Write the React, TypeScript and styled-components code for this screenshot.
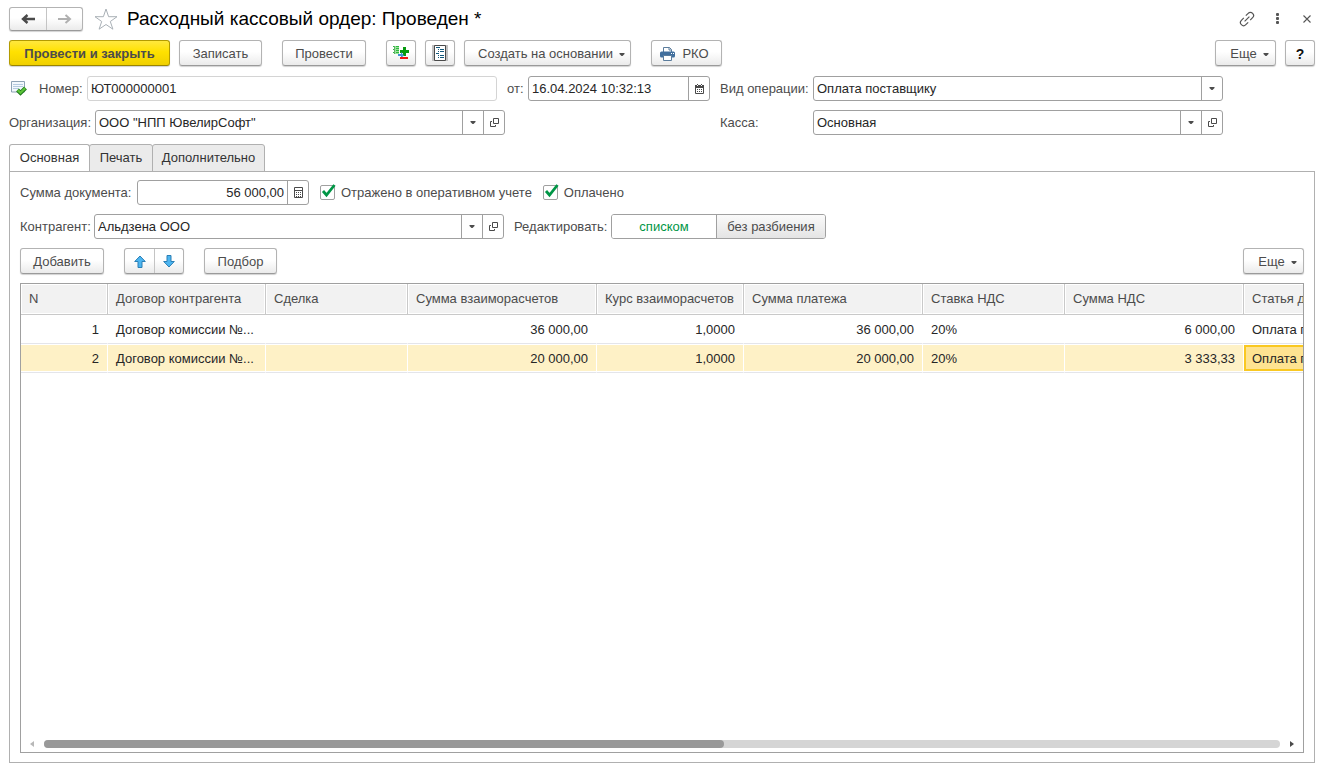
import React from "react";
import styled, { createGlobalStyle, css } from "styled-components";

const GlobalStyle = createGlobalStyle`
  *, *::before, *::after { box-sizing: border-box; }
  body { margin: 0; background: #fff; }
  body, button, input, select, table {
    font-family: "Liberation Sans", Arial, sans-serif;
    font-size: 13px;
    line-height: 16px;
    color: #4c4c4c;
  }
`;

const line = "#a0a0a0";

const Page = styled.main`
  display: flex;
  flex-direction: column;
  min-height: 100vh;
  padding: 6px 6px 5px 9px;
`;

const TitleBar = styled.header`
  display: flex;
  align-items: center;
  height: 25px;
`;

const Title = styled.h1`
  flex: 1;
  margin: 0 0 0 9px;
  font-size: 19px;
  line-height: 24px;
  font-weight: 400;
  color: #000;
  white-space: nowrap;
`;

const IconButton = styled.button`
  display: grid;
  place-items: center;
  width: 16px;
  height: 24px;
  padding: 0;
  border: 0;
  background: none;
`;

const TitleActions = styled.div`
  display: flex;
  gap: 14px;
`;

const StarButton = styled(IconButton)`
  width: 24px;
  margin-left: 11px;
`;

const Toolbar = styled.div<{ $top: number }>`
  display: flex;
  align-items: flex-start;
  margin-top: ${(p) => p.$top}px;
`;

const Gap = styled.span<{ $size?: number }>`
  width: ${(p) => p.$size ?? 20}px;
`;

const Spacer = styled.span`
  flex: 1;
`;

const raised = css`
  border: 1px solid #b3b3b3;
  border-bottom-color: #9a9a9a;
  border-radius: 3px;
  background: linear-gradient(#fff 0%, #fff 45%, #ebebeb 100%);
  box-shadow: 0 1px 1px rgba(0, 0, 0, 0.18);
`;

const Button = styled.button<{ $primary?: boolean; $width: number }>`
  ${raised}
  display: flex;
  align-items: center;
  justify-content: center;
  gap: 6px;
  flex: none;
  width: ${(p) => p.$width}px;
  height: 26px;
  padding: 2px 0 0;
  white-space: nowrap;
  ${(p) =>
    p.$primary &&
    css`
      font-weight: 700;
      border-color: #b39b00;
      border-bottom-color: #9a8500;
      background: linear-gradient(#ffe83e 0%, #ffe100 45%, #f0d000 100%);
    `}
`;

const MenuButton = styled(Button)`
  padding-left: 8px;
`;

const IconOnlyButton = styled(Button)`
  padding: 0;
`;

const PrintButton = styled(Button)`
  gap: 7px;
  padding-right: 4px;
`;

const HelpMark = styled.b`
  font-size: 14px;
  color: #111;
`;

const PairGroup = styled.div<{ $height: number }>`
  ${raised}
  display: flex;
  height: ${(p) => p.$height}px;
`;

const PairButton = styled.button<{ $width: number }>`
  display: grid;
  place-items: center;
  width: ${(p) => p.$width}px;
  padding: 0;
  border: 0;
  background: none;
  & + & {
    border-left: 1px solid #c4c4c4;
  }
`;

const Form = styled.div`
  display: grid;
  grid-template-columns: minmax(0, 701fr) minmax(0, 503fr);
  gap: 9px 10px;
  margin-top: 10px;
  padding-right: 92px;
`;

const FormRow = styled.div<{ $top?: number }>`
  display: flex;
  align-items: center;
  min-width: 0;
  height: 25px;
  margin-top: ${(p) => p.$top ?? 0}px;
`;

const Label = styled.label<{ $width?: number }>`
  flex: none;
  width: ${(p) => (p.$width ? `${p.$width}px` : "auto")};
  white-space: nowrap;
`;

const Field = styled.div<{ $width?: number; $muted?: boolean }>`
  display: grid;
  grid-template-columns: minmax(0, 1fr) auto auto;
  flex: ${(p) => (p.$width ? `0 1 ${p.$width}px` : "1")};
  min-width: 0;
  height: 25px;
  border: 1px solid ${(p) => (p.$muted ? "#d4d4d4" : line)};
  border-radius: 3px;
  background: #fff;
  overflow: hidden;
`;

const valueText = css`
  width: 100%;
  min-width: 0;
  height: 23px;
  padding: 0 3px;
  border: 0;
  outline: 0;
  background: transparent;
  color: #262626;
`;

const TextInput = styled.input<{ $right?: boolean }>`
  ${valueText}
  text-align: ${(p) => (p.$right ? "right" : "left")};
`;

const Select = styled.select`
  ${valueText}
  appearance: none;
  grid-row: 1;
  grid-column: 1 / 3;
  padding-right: 24px;
`;

const ArrowCell = styled.span`
  grid-row: 1;
  grid-column: 2;
  display: grid;
  place-items: center;
  width: 21px;
  border-left: 1px solid ${line};
  pointer-events: none;
`;

const FieldButton = styled.button`
  display: grid;
  place-items: center;
  width: 21px;
  padding: 0;
  border: 0;
  border-left: 1px solid ${line};
  background: none;
`;

const StatusIcon = styled.span`
  display: grid;
  width: 30px;
  height: 25px;
  align-items: center;
`;

const Tabs = styled.div`
  display: flex;
  height: 28px;
  margin-top: 9px;
  margin-bottom: -1px;
`;

const Tab = styled.button<{ $active?: boolean; $width: number }>`
  width: ${(p) => p.$width}px;
  padding: 0;
  border: 1px solid #b0b0b0;
  border-bottom-color: ${(p) => (p.$active ? "#fff" : "#b0b0b0")};
  border-radius: 3px 3px 0 0;
  background: ${(p) => (p.$active ? "#fff" : "#ebebeb")};
  color: #333;
  & + & {
    margin-left: -1px;
  }
`;

const Panel = styled.section`
  display: flex;
  flex-direction: column;
  flex: 1;
  padding: 8px 10px 9px;
  border: 1px solid #b0b0b0;
`;

const CheckLabel = styled.label`
  display: flex;
  align-items: center;
  gap: 6px;
  margin-left: 11px;
  white-space: nowrap;
`;

const CheckBox = styled.span`
  display: grid;
  width: 15px;
  height: 15px;
  & > * {
    grid-area: 1 / 1;
  }
  & svg {
    overflow: visible;
    pointer-events: none;
  }
  & input {
    appearance: none;
    width: 15px;
    height: 15px;
    margin: 0;
    border: 1px solid ${line};
    border-radius: 2px;
    background: #fff;
  }
  & input:not(:checked) + svg {
    visibility: hidden;
  }
`;

const Segments = styled.div`
  display: flex;
  height: 25px;
  border: 1px solid ${line};
  border-radius: 3px;
  overflow: hidden;
`;

const Segment = styled.button<{ $on?: boolean; $width: number }>`
  width: ${(p) => p.$width}px;
  padding: 0;
  border: 0;
  background: ${(p) => (p.$on ? "#fff" : "linear-gradient(#fafafa, #e4e4e4)")};
  color: ${(p) => (p.$on ? "#009646" : "#4c4c4c")};
  & + & {
    border-left: 1px solid ${line};
  }
`;

const Grid = styled.div`
  display: flex;
  flex-direction: column;
  flex: 1;
  min-width: 0;
  margin-top: 9px;
  border: 1px solid ${line};
`;

const GridBody = styled.div`
  flex: 1;
  overflow: hidden;
`;

const Table = styled.table`
  width: 1402px;
  table-layout: fixed;
  border-collapse: separate;
  border-spacing: 0;
`;

const Th = styled.th`
  height: 31px;
  padding: 0 0 0 8px;
  border-right: 1px solid #c9c9c9;
  border-bottom: 1px solid #c9c9c9;
  background: #f2f2f2;
  box-shadow: inset 1px 1px #fff, inset -1px -1px #fff;
  font-weight: 400;
  text-align: left;
  white-space: nowrap;
`;

const Td = styled.td<{ $right?: boolean; $active?: boolean }>`
  height: 29px;
  padding: 2px 8px 0;
  border-right: 1px solid #fff;
  border-bottom: 1px solid #e4e5ea;
  box-shadow: inset 0 1px #fff, inset 0 -1px #fff;
  color: #262626;
  text-align: ${(p) => (p.$right ? "right" : "left")};
  white-space: nowrap;
  ${(p) =>
    p.$active &&
    css`
      background: #fee391;
      box-shadow: inset 0 1px #fff, inset 0 -1px #fff, inset 0 3px #f9c822,
        inset 0 -3px #f9c822, inset 2px 0 #f9c822, inset -2px 0 #f9c822;
    `}
`;

const Row = styled.tr<{ $selected?: boolean }>`
  background: ${(p) => (p.$selected ? "#fef1c6" : "#fff")};
`;

const ScrollBar = styled.div`
  display: flex;
  align-items: center;
  gap: 8px;
  height: 16px;
  padding: 0 7px;
`;

const Track = styled.div`
  flex: 1;
  height: 8px;
  border-radius: 4px;
  background: #d5d5d5;
`;

const Thumb = styled.div`
  width: 55%;
  height: 8px;
  border-radius: 4px;
  background: #999;
`;

const ScrollArrow = styled.button`
  display: grid;
  place-items: center;
  width: 8px;
  height: 16px;
  padding: 0;
  border: 0;
  background: none;
`;

const Caret = () => (
  <svg width="6" height="3" viewBox="0 0 6 3" aria-hidden="true">
    <path d="M0.500 0h5v1L3.500 3h-1L0.500 1z" fill="#4c4c4c" />
  </svg>
);

const NavArrow = ({ back }: { back?: boolean }) => (
  <svg width="15" height="12" viewBox="0 0 15 12" aria-hidden="true">
    <path
      d={back ? "M14 6H3M6.500 2L2 6l4.500 4" : "M1 6h11M8.500 2L13 6l-4.500 4"}
      fill="none"
      stroke={back ? "#4a4a4a" : "#b0b0b0"}
      strokeWidth={back ? 2.4 : 2}
    />
  </svg>
);

const Star = () => (
  <svg width="24" height="22" viewBox="0 0 24 22" aria-hidden="true">
    <path
      d="M12 1l2.600 7.700H23l-6.700 4.800 2.600 7.700L12 16.500l-6.900 4.700 2.600-7.700L1 8.700h8.400z"
      fill="#fff"
      stroke="#a9b0b6"
    />
  </svg>
);

const LinkIcon = () => (
  <svg width="16" height="16" viewBox="0 0 16 16" fill="none" stroke="#555" strokeWidth="1.200" aria-hidden="true">
    <path d="M6.800 4.700L9.200 2.300a3.110 3.110 0 0 1 4.400 4.400L11.200 9.100" />
    <path d="M9.200 11.300L6.800 13.700a3.110 3.110 0 0 1-4.400-4.400L4.800 6.900" />
    <path d="M5.600 10.400l4.800-4.800" />
  </svg>
);

const Dots = () => (
  <svg width="3" height="11" viewBox="0 0 3 11" fill="#555" aria-hidden="true">
    <rect width="3" height="3" rx="1" y="0" />
    <rect width="3" height="3" rx="1" y="4" />
    <rect width="3" height="3" rx="1" y="8" />
  </svg>
);

const Cross = () => (
  <svg width="8" height="8" viewBox="0 0 8 8" aria-hidden="true">
    <path d="M0.500 0.500l7 7M7.500 0.500l-7 7" stroke="#555" strokeWidth="1.100" />
  </svg>
);

const Calendar = () => (
  <svg width="9" height="10" viewBox="0 0 9 10" aria-hidden="true">
    <path d="M0.500 1.500h8v8h-8z" fill="#fff" stroke="#4a4a4a" />
    <path d="M0 1h9v3H0zM2 0h1v1H2zM6 0h1v1H6z" fill="#4a4a4a" />
    <path d="M2 5h1v1H2zM4 5h1v1H4zM6 5h1v1H6zM2 7h1v1H2zM4 7h1v1H4zM6 7h1v1H6z" fill="#4a4a4a" />
    <path d="M2 1h1v1H2zM6 1h1v1H6z" fill="#fff" />
  </svg>
);

const Calculator = () => (
  <svg width="9" height="11" viewBox="0 0 9 11" aria-hidden="true">
    <path d="M0.500 0.500h8v10h-8zM0.500 3.500h8" fill="none" stroke="#4a4a4a" />
    <path d="M2 5h1v1H2zM4 5h1v1H4zM6 5h1v1H6zM2 7h1v1H2zM4 7h1v1H4zM6 7h1v1H6zM2 9h1v1H2zM4 9h1v1H4zM6 9h1v1H6z" fill="#4a4a4a" />
  </svg>
);

const OpenIcon = () => (
  <svg width="9" height="9" viewBox="0 0 9 9" fill="none" stroke="#4a4a4a" aria-hidden="true">
    <path d="M3.500 0.500h5v5h-5z" />
    <path d="M2 3.500H0.500v5h5V7" />
  </svg>
);

const PostedIcon = () => (
  <svg width="18" height="16" viewBox="0 0 18 16" aria-hidden="true">
    <path d="M2.500 0.500h13v10.500h-13z" fill="#f3f8fd" stroke="#8ea3b5" />
    <path d="M4 3.500h10M4 5.500h10M4 7.500h6" stroke="#b5cbe0" />
    <path d="M8.500 9l3 3 5-5" fill="none" stroke="#1f7a1c" strokeWidth="4" />
    <path d="M8.700 9.100l2.800 2.700 4.700-4.700" fill="none" stroke="#5cc338" strokeWidth="2.200" />
  </svg>
);

const PostingsIcon = () => (
  <svg width="16" height="16" viewBox="0 0 16 16" aria-hidden="true">
    <path d="M1 1h5v8H1z" fill="#9be29c" />
    <path d="M0 1h1v1H0zM0 4h1v1H0zM0 7h1v1H0zM3 1h3v1H3zM3 3h3v1H3zM3 5h3v1H3zM3 7h3v1H3z" fill="#2dbb3c" />
    <path d="M1 1h1v8H1z" fill="#5fae68" />
    <path d="M10 2h3v3h3v3h-3v3h-3V8H7V5h3z" fill="#079a10" />
    <path d="M5 9h3V7l3 3.500L8 13v-2H5z" fill="#3f93d4" />
    <path d="M7 12h8v2H7z" fill="#f01414" />
  </svg>
);

const ReportIcon = () => (
  <svg width="16" height="16" viewBox="0 0 16 16" aria-hidden="true">
    <path d="M0 0h16v16H0z" fill="#c2c2c2" />
    <path d="M2.500 0.500h11v15h-11z" fill="#fff" stroke="#4a4a4a" />
    <path d="M4 2.500h4M6 4.500h1M8 4.500h4M6 6.500h1M8 6.500h4M4 8.500h3M6 10.500h1M8 10.500h4M6 12.500h1M8 12.500h4" stroke="#145a7d" />
  </svg>
);

const Printer = () => (
  <svg width="15" height="14" viewBox="0 0 15 14" aria-hidden="true">
    <path d="M3.500 5V0.500h6l2 2V5" fill="#fff" stroke="#5b7c9c" />
    <path d="M9 0.500V3h2.500" fill="none" stroke="#5b7c9c" />
    <rect y="4.500" width="15" height="6" rx="1.500" fill="#416f9d" />
    <path d="M11 6h1v1h-1zM13 6h1v1h-1z" fill="#fff" />
    <path d="M3.500 8.500h8v5h-8z" fill="#fff" stroke="#5b7c9c" />
  </svg>
);

const Move = ({ down }: { down?: boolean }) => (
  <svg width="12" height="13" viewBox="0 0 12 13" aria-hidden="true">
    <path
      d={down ? "M4 0.500h4v6h3.300L6 12 0.700 6.500H4z" : "M4 12.500h4v-6h3.300L6 1 0.700 6.500H4z"}
      fill="#4db5f0"
      stroke="#2b7fb5"
    />
  </svg>
);

const Check = () => (
  <svg width="15" height="15" viewBox="0 0 15 15" aria-hidden="true">
    <path d="M3 6l3.500 4L14.500 0" fill="none" stroke="#009646" strokeWidth="2.800" />
  </svg>
);

interface LookupProps {
  id: string;
  value: string;
  width?: number;
  open?: boolean;
}

const Lookup = ({ id, value, width, open = true }: LookupProps) => (
  <Field $width={width}>
    <Select id={id}>
      <option>{value}</option>
    </Select>
    <ArrowCell>
      <Caret />
    </ArrowCell>
    {open && (
      <FieldButton type="button" aria-label="Открыть">
        <OpenIcon />
      </FieldButton>
    )}
  </Field>
);

const CheckItem = ({ text }: { text: string }) => (
  <CheckLabel>
    <CheckBox>
      <input type="checkbox" defaultChecked />
      <Check />
    </CheckBox>
    {text}
  </CheckLabel>
);

const columns = [
  { title: "N", width: 87, right: true },
  { title: "Договор контрагента", width: 158 },
  { title: "Сделка", width: 142 },
  { title: "Сумма взаиморасчетов", width: 189, right: true },
  { title: "Курс взаиморасчетов", width: 147, right: true },
  { title: "Сумма платежа", width: 179, right: true },
  { title: "Ставка НДС", width: 142 },
  { title: "Сумма НДС", width: 179, right: true },
  { title: "Статья движения", width: 179 },
];

const rows = [
  ["1", "Договор комиссии №...", "", "36 000,00", "1,0000", "36 000,00", "20%", "6 000,00", "Оплата поставщикам"],
  ["2", "Договор комиссии №...", "", "20 000,00", "1,0000", "20 000,00", "20%", "3 333,33", "Оплата поставщикам"],
];

export default function App() {
  return (
    <>
      <GlobalStyle />
      <Page>
        <TitleBar>
          <PairGroup $height={24}>
            <PairButton type="button" $width={36} aria-label="Назад">
              <NavArrow back />
            </PairButton>
            <PairButton type="button" $width={36} aria-label="Вперед">
              <NavArrow />
            </PairButton>
          </PairGroup>
          <StarButton type="button" aria-label="В избранное">
            <Star />
          </StarButton>
          <Title>Расходный кассовый ордер: Проведен *</Title>
          <TitleActions>
            <IconButton type="button" aria-label="Ссылка">
              <LinkIcon />
            </IconButton>
            <IconButton type="button" aria-label="Меню">
              <Dots />
            </IconButton>
            <IconButton type="button" aria-label="Закрыть">
              <Cross />
            </IconButton>
          </TitleActions>
        </TitleBar>

        <Toolbar $top={9}>
          <Button type="button" $primary $width={161}>Провести и закрыть</Button>
          <Gap $size={9} />
          <Button type="button" $width={83}>Записать</Button>
          <Gap />
          <Button type="button" $width={84}>Провести</Button>
          <Gap />
          <IconOnlyButton type="button" $width={30} aria-label="Движения документа">
            <PostingsIcon />
          </IconOnlyButton>
          <Gap $size={9} />
          <IconOnlyButton type="button" $width={30} aria-label="Отчет">
            <ReportIcon />
          </IconOnlyButton>
          <Gap $size={9} />
          <MenuButton type="button" $width={167}>
            Создать на основании <Caret />
          </MenuButton>
          <Gap />
          <PrintButton type="button" $width={71}>
            <Printer /> РКО
          </PrintButton>
          <Spacer />
          <MenuButton type="button" $width={61}>
            Еще <Caret />
          </MenuButton>
          <Gap $size={9} />
          <Button type="button" $width={30} aria-label="Справка">
            <HelpMark>?</HelpMark>
          </Button>
        </Toolbar>

        <Form>
          <FormRow>
            <StatusIcon>
              <PostedIcon />
            </StatusIcon>
            <Label htmlFor="number" $width={48}>Номер:</Label>
            <Field $muted>
              <TextInput id="number" defaultValue="ЮТ000000001" />
            </Field>
            <Gap $size={10} />
            <Label htmlFor="date" $width={21}>от:</Label>
            <Field $width={182}>
              <TextInput id="date" defaultValue="16.04.2024 10:32:13" />
              <FieldButton type="button" aria-label="Календарь">
                <Calendar />
              </FieldButton>
            </Field>
          </FormRow>
          <FormRow>
            <Label htmlFor="operation" $width={93}>Вид операции:</Label>
            <Lookup id="operation" value="Оплата поставщику" open={false} />
          </FormRow>
          <FormRow>
            <Label htmlFor="organization" $width={86}>Организация:</Label>
            <Lookup id="organization" value={'ООО "НПП ЮвелирСофт"'} width={410} />
          </FormRow>
          <FormRow>
            <Label htmlFor="cashbox" $width={93}>Касса:</Label>
            <Lookup id="cashbox" value="Основная" />
          </FormRow>
        </Form>

        <Tabs role="tablist">
          <Tab type="button" role="tab" aria-selected="true" $active $width={81}>Основная</Tab>
          <Tab type="button" role="tab" $width={64}>Печать</Tab>
          <Tab type="button" role="tab" $width={113}>Дополнительно</Tab>
        </Tabs>

        <Panel>
          <FormRow>
            <Label htmlFor="total" $width={117}>Сумма документа:</Label>
            <Field $width={172}>
              <TextInput id="total" $right defaultValue="56 000,00" />
              <FieldButton type="button" aria-label="Калькулятор">
                <Calculator />
              </FieldButton>
            </Field>
            <CheckItem text="Отражено в оперативном учете" />
            <CheckItem text="Оплачено" />
          </FormRow>
          <FormRow $top={9}>
            <Label htmlFor="partner" $width={74}>Контрагент:</Label>
            <Lookup id="partner" value="Альдзена ООО" width={410} />
            <Gap $size={10} />
            <Label as="span" $width={97}>Редактировать:</Label>
            <Segments>
              <Segment type="button" $on $width={104}>списком</Segment>
              <Segment type="button" $width={109}>без разбиения</Segment>
            </Segments>
          </FormRow>
          <Toolbar $top={9}>
            <Button type="button" $width={84}>Добавить</Button>
            <Gap />
            <PairGroup $height={26}>
              <PairButton type="button" $width={29} aria-label="Вверх">
                <Move />
              </PairButton>
              <PairButton type="button" $width={29} aria-label="Вниз">
                <Move down />
              </PairButton>
            </PairGroup>
            <Gap />
            <Button type="button" $width={73}>Подбор</Button>
            <Spacer />
            <MenuButton type="button" $width={61}>
              Еще <Caret />
            </MenuButton>
          </Toolbar>
          <Grid>
            <GridBody>
              <Table>
                <colgroup>
                  {columns.map((c) => (
                    <col key={c.title} width={c.width} />
                  ))}
                </colgroup>
                <thead>
                  <tr>
                    {columns.map((c) => (
                      <Th key={c.title} scope="col">{c.title}</Th>
                    ))}
                  </tr>
                </thead>
                <tbody>
                  {rows.map((cells, r) => (
                    <Row key={r} $selected={r === 1}>
                      {cells.map((cell, i) => (
                        <Td key={i} $right={columns[i].right} $active={r === 1 && i === 8}>
                          {cell}
                        </Td>
                      ))}
                    </Row>
                  ))}
                </tbody>
              </Table>
            </GridBody>
            <ScrollBar>
              <ScrollArrow type="button" aria-label="Прокрутить влево">
                <svg width="4" height="6" viewBox="0 0 4 6" aria-hidden="true">
                  <path d="M4 0v6L0 3z" fill="#b8b8b8" />
                </svg>
              </ScrollArrow>
              <Track>
                <Thumb />
              </Track>
              <ScrollArrow type="button" aria-label="Прокрутить вправо">
                <svg width="4" height="6" viewBox="0 0 4 6" aria-hidden="true">
                  <path d="M0 0v6l4-3z" fill="#4a4a4a" />
                </svg>
              </ScrollArrow>
            </ScrollBar>
          </Grid>
        </Panel>
      </Page>
    </>
  );
}
